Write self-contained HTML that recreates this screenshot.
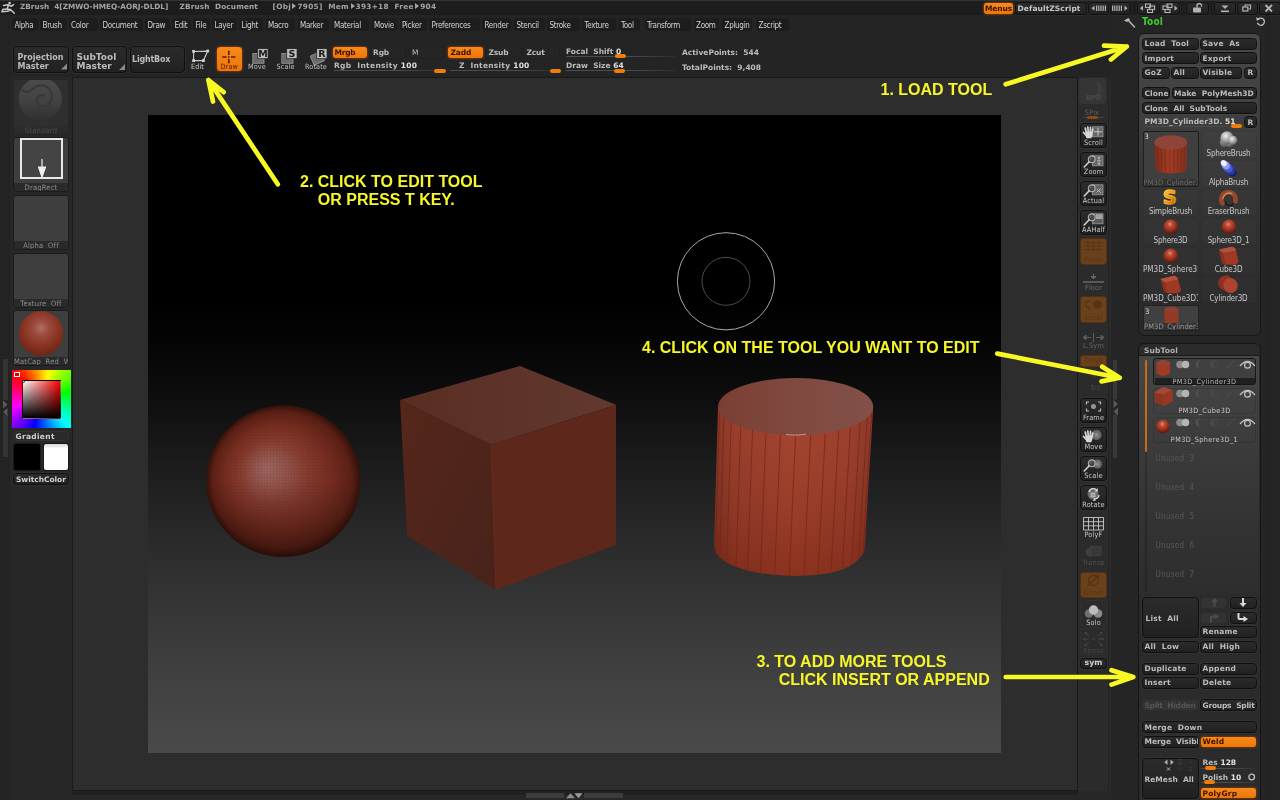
<!DOCTYPE html><html><head><meta charset="utf-8"><title>ZBrush</title><style>
*{box-sizing:border-box}
html,body{margin:0;padding:0}
body{width:1280px;height:800px;position:relative;overflow:hidden;background:#272727;font-family:"DejaVu Sans","Liberation Sans",sans-serif;font-size:7.500px;font-weight:bold;color:#bcbcbc;line-height:10px;letter-spacing:0}
.a{position:absolute;white-space:pre;line-height:12px}
.b{position:absolute;white-space:pre;background:linear-gradient(#2b2b2b,#212121);border:1px solid #101010;border-radius:3.5px;padding:.5px 0 0 1.500px;line-height:9px;overflow:hidden;letter-spacing:.2px;box-shadow:0 0 0 .5px rgba(90,90,90,.35)}
.o{background:linear-gradient(#f58a1c,#ee7608);color:#3a1200;border-color:#6a2c00}
.d{color:#555;background:#333;border-color:#2c2c2c;box-shadow:none}
.m{position:absolute;top:17.5px;height:13px;background:#1d1d1d;border-radius:3px;font-family:"DejaVu Sans Condensed","Liberation Sans",sans-serif;font-weight:normal;font-size:8px;letter-spacing:-.3px;color:#d2d2d2;line-height:15px;padding-left:2.5px;white-space:pre;overflow:hidden}
.t{position:absolute;font-family:"Liberation Sans",sans-serif;font-weight:bold;font-size:16px;line-height:18px;color:#f6f628;white-space:pre;letter-spacing:0}
.l{position:absolute;white-space:pre;font-family:"DejaVu Sans Condensed","Liberation Sans",sans-serif;font-weight:normal;font-size:8px;letter-spacing:-.2px;color:#c8c8c8;text-align:center;line-height:10px}
.sl{position:absolute;height:1px;background:linear-gradient(to right,#4c4c4c,#4c4c4c 60%,rgba(76,76,76,.2))}
.th{position:absolute;height:4px;border-radius:2px;background:#f07c0c}
.sh{position:absolute;left:1080px;width:27px;border-radius:3.5px}
.sb{background:linear-gradient(#2c2c2c,#1f1f1f);border:1px solid #101010;box-shadow:0 0 0 .5px rgba(90,90,90,.35)}
.so{background:#6a411c;border:1px solid #54300f}
.sx{position:absolute;left:0;width:100%;text-align:center;font-family:"DejaVu Sans Condensed","Liberation Sans",sans-serif;font-weight:normal;font-size:7.300px;letter-spacing:.15px;color:#c6c6c6;line-height:9px;white-space:pre}
.tr{position:absolute;left:13px;width:56px;border-radius:3px;background:#3e3e3e;border:1px solid #1c1c1c}
.tl{position:absolute;left:0;bottom:0;width:100%;height:8px;background:#2a2a2a;text-align:center;font-family:"DejaVu Sans Condensed","Liberation Sans",sans-serif;font-weight:normal;font-size:7.5px;letter-spacing:.2px;color:#8e8e8e;line-height:10px;white-space:pre;overflow:hidden}
.tri{display:inline-block;width:0;height:0;border-left:4.500px solid #a4a4a4;border-top:3px solid transparent;border-bottom:3px solid transparent;margin:0 1px 0 1.500px;vertical-align:-.5px}
#w{position:absolute;left:0;top:0;width:1280px;height:800px;overflow:hidden;will-change:transform}
svg{position:absolute;overflow:visible}
</style></head><body><div id="w">
<div class="a" style="left:0px;top:0px;width:1280px;height:15px;background:#1d1d1d;border-top:1px solid #333"></div>
<div class="a" style="left:0px;top:15px;width:10px;height:785px;background:#232323"></div>
<div class="a" style="left:10px;top:15px;width:1102px;height:62px;background:#242424"></div>
<div class="a" style="left:1111px;top:15px;width:169px;height:785px;background:#252525"></div>
<div class="a" style="left:72px;top:76.5px;width:1006px;height:714.5px;background:#2d2d2d;border:1px solid #191919"></div>
<div class="a" style="left:72px;top:791px;width:1006px;height:4px;background:#212121"></div>
<div class="a" style="left:1078px;top:77px;width:33px;height:714px;background:#2b2b2b"></div>
<div class="a" style="left:1107.5px;top:77px;width:1px;height:714px;background:#232323"></div>
<div class="a" style="left:148px;top:115px;width:853px;height:638px;background:linear-gradient(#000 0%,#000 30%,#0b0b0b 42%,#1c1c1c 55%,#2e2e2e 70%,#3d3d3d 84%,#4a4a4a 100%)"></div>
<svg style="left:1px;top:1px" width="14" height="14" viewBox="0 0 14 14"><circle cx="8.6" cy="2" r="1.3" fill="#c8c8c8"/><path d="M2.5 4.5 L7 3.8 L10.5 5.2 L12.5 3.6 M7.6 4 L6 8 L2 8.2 L0.8 10.8 L6.5 10.2 L10 9 L13.3 12.3 M6 8 L9.5 8.6" fill="none" stroke="#c8c8c8" stroke-width="1.5" stroke-linecap="round" stroke-linejoin="round"/></svg>
<div class="a" style="left:20px;top:0.8px;color:#a4a4a4;letter-spacing:0;font-size:7.300px">ZBrush  4[ZMWO-HMEQ-AORJ-DLDL]</div>
<div class="a" style="left:179.5px;top:0.8px;color:#a4a4a4;letter-spacing:.15px;font-size:7.300px">ZBrush  Document</div>
<div class="a" style="left:272.5px;top:0.8px;color:#a4a4a4;letter-spacing:.3px;font-size:7.300px">[Obj<i class="tri"></i>7905]  Mem<i class="tri"></i>393+18  Free<i class="tri"></i>904</div>
<div class="b o" style="left:982.5px;top:1.5px;width:31.0px;height:13.5px;padding:1.5px 0 0 1.5px;line-height:10px;letter-spacing:-.15px">Menus</div>
<div class="b " style="left:1015px;top:1.5px;width:71.5px;height:13.5px;padding:1.5px 0 0 1.5px;line-height:10px;letter-spacing:.1px;color:#c8c8c8">DefaultZScript</div>
<div class="b " style="left:1087.5px;top:1.5px;width:21.0px;height:13.5px;"></div>
<div class="b " style="left:1109.5px;top:1.5px;width:21.0px;height:13.5px;"></div>
<div class="b " style="left:1137px;top:1.5px;width:21px;height:13.5px;"></div>
<div class="b " style="left:1158.5px;top:1.5px;width:21.5px;height:13.5px;"></div>
<div class="b " style="left:1186px;top:1.5px;width:22.5px;height:13.5px;"></div>
<div class="b " style="left:1214px;top:1.5px;width:22px;height:13.5px;"></div>
<div class="b " style="left:1237px;top:1.5px;width:21px;height:13.5px;"></div>
<div class="b " style="left:1259px;top:1.5px;width:22px;height:13.5px;"></div>
<svg style="left:0;top:0" width="1280" height="16" viewBox="0 0 1280 16"><g fill="#b2b2b2" stroke="none"><path d="M1091.5 8.2l3-2.6v5.2z"/><rect x="1096" y="5.5" width="1.2" height="5.5"/><rect x="1098.2" y="5.5" width="1.2" height="5.5"/><rect x="1100.4" y="5.5" width="1.2" height="5.5"/><rect x="1102.6" y="5.5" width="1.2" height="5.5"/><rect x="1104.8" y="5.5" width="1.2" height="5.5"/><path d="M1127.5 8.2l-3-2.6v5.2z"/><rect x="1112" y="5.5" width="1.2" height="5.5"/><rect x="1114.2" y="5.5" width="1.2" height="5.5"/><rect x="1116.4" y="5.5" width="1.2" height="5.5"/><rect x="1118.6" y="5.5" width="1.2" height="5.5"/><rect x="1120.8" y="5.5" width="1.2" height="5.5"/><path d="M1140 8.2l3-2.6v5.2z"/><path d="M1177.500 8.2l-3-2.6v5.2z"/></g><g fill="none" stroke="#b2b2b2" stroke-width="1.1"><rect x="1145.500" y="4" width="5" height="3.500"/><rect x="1149.500" y="6" width="5" height="3.500"/><rect x="1147.500" y="9.500" width="5" height="3"/><rect x="1163" y="6" width="5" height="3.500"/><rect x="1167" y="4" width="5" height="3.500"/><rect x="1165" y="9.500" width="5" height="3"/><path d="M1197 7.500v-1.700a2.300 2.300 0 0 1 4.600 0v.7" stroke-width="1.400"/><rect x="1242.800" y="7" width="5" height="4" stroke-width="1.200"/><path d="M1245 6.500v-1.500h5.500v4h-2.200" stroke-width="1.200"/><path d="M1265.500 5l6.500 6.500M1272 5l-6.500 6.500" stroke-width="1.900"/></g><g fill="#b2b2b2"><rect x="1193" y="7.500" width="8" height="5" rx=".8"/><path d="M1221.500 5.500h7l-3.500 3.500z"/><rect x="1221" y="10.500" width="8" height="1.600"/></g></svg>
<div class="m" style="left:12px;width:25.5px">Alpha</div>
<div class="m" style="left:40px;width:26.5px">Brush</div>
<div class="m" style="left:68.5px;width:29.5px">Color</div>
<div class="m" style="left:100px;width:42.5px">Document</div>
<div class="m" style="left:145px;width:25px">Draw</div>
<div class="m" style="left:172px;width:18.5px">Edit</div>
<div class="m" style="left:193px;width:16.5px">File</div>
<div class="m" style="left:212px;width:25px">Layer</div>
<div class="m" style="left:239px;width:24px">Light</div>
<div class="m" style="left:265.5px;width:29.5px">Macro</div>
<div class="m" style="left:297.5px;width:31.5px">Marker</div>
<div class="m" style="left:331.5px;width:37.5px">Material</div>
<div class="m" style="left:371.5px;width:25.5px">Movie</div>
<div class="m" style="left:399.5px;width:27.5px">Picker</div>
<div class="m" style="left:429px;width:51px">Preferences</div>
<div class="m" style="left:482px;width:29px">Render</div>
<div class="m" style="left:514px;width:30.5px">Stencil</div>
<div class="m" style="left:547px;width:32.5px">Stroke</div>
<div class="m" style="left:582px;width:34px">Texture</div>
<div class="m" style="left:618.5px;width:21.5px">Tool</div>
<div class="m" style="left:644.5px;width:46.5px">Transform</div>
<div class="m" style="left:693.5px;width:25.5px">Zoom</div>
<div class="m" style="left:722px;width:29.5px">Zplugin</div>
<div class="m" style="left:756px;width:32.5px">Zscript</div>
<div class="b " style="left:13px;top:46px;width:56px;height:26.5px;padding:5.500px 0 0 3.5px;line-height:9px;border-radius:4px;letter-spacing:0;font-size:8px">Projection
Master</div>
<div class="b " style="left:71.5px;top:46px;width:55.5px;height:27px;padding:5.500px 0 0 4px;font-size:9px;line-height:9.5px;border-radius:4px;letter-spacing:0">SubTool
Master</div>
<div class="b " style="left:129.5px;top:46px;width:55.5px;height:26.5px;padding:8px 0 0 1.5px;line-height:10px;border-radius:4px;letter-spacing:-.2px;font-size:8px">LightBox</div>
<svg style="left:0;top:0" width="400" height="80"><path d="M61 69.500l6-6v6zM119 70l6-6v6z" fill="#8a8a8a"/></svg>
<svg style="left:188px;top:46px" width="26" height="27" viewBox="0 0 26 27"><path d="M5.600 5.500L19.700 5.100 15.400 14.600H5.600z" fill="none" stroke="#c8c8c8" stroke-width="1.100"/><g fill="#d0d0d0"><rect x="4.200" y="4" width="2.800" height="2.800"/><rect x="18.300" y="3.600" width="2.800" height="2.800"/><rect x="4.200" y="13.200" width="2.800" height="2.800"/><rect x="14" y="13.200" width="2.800" height="2.800"/></g></svg>
<div class="l" style="left:188.5px;top:62px;width:18px;color:#d0d0d0;font-size:7.200px;letter-spacing:.1px">Edit</div>
<div class="b o" style="left:215.5px;top:45.7px;width:27.3px;height:26.6px;border-radius:4px"></div>
<svg style="left:216px;top:46px" width="28" height="27" viewBox="0 0 28 27"><g stroke="#5a1c00" stroke-width="1.600"><path d="M12.800 4.800v4.200M12.800 13v4.200M6.200 11h4.400M15 11h4.400"/><rect x="12" y="10.200" width="1.600" height="1.600" fill="#5a1c00" stroke="none"/></g></svg>
<div class="l" style="left:215.5px;top:62px;width:27.500px;color:#501800;font-size:7.200px;letter-spacing:.2px">Draw</div>
<svg style="left:245px;top:46px" width="26" height="27" viewBox="0 0 26 27"><g><rect x="7.800" y="7.400" width="11.200" height="9.900" fill="#6c6c6c" stroke="#969696" stroke-width=".8"/></g><rect x="12.750" y="2.700" width="10.300" height="10" fill="#bebebe" stroke="#1c1c1c" stroke-width=".7"/><text x="17.900" y="11.200" text-anchor="middle" font-family="DejaVu Sans,sans-serif" font-weight="bold" font-size="9.500" fill="#1a1a1a">M</text></svg>
<div class="l" style="left:242px;top:62px;width:30px;color:#c4c4c4;font-size:7.200px;letter-spacing:.15px">Move</div>
<svg style="left:273.5px;top:46px" width="26" height="27" viewBox="0 0 26 27"><g><rect x="7.800" y="7.400" width="11.200" height="9.900" fill="#6c6c6c" stroke="#969696" stroke-width=".8"/></g><rect x="12.750" y="2.700" width="10.300" height="10" fill="#bebebe" stroke="#1c1c1c" stroke-width=".7"/><text x="17.900" y="11.200" text-anchor="middle" font-family="DejaVu Sans,sans-serif" font-weight="bold" font-size="9.500" fill="#1a1a1a">S</text></svg>
<div class="l" style="left:270.5px;top:62px;width:30px;color:#c4c4c4;font-size:7.200px;letter-spacing:.15px">Scale</div>
<svg style="left:304px;top:46px" width="26" height="27" viewBox="0 0 26 27"><g transform="rotate(-24 13.500 12.500)"><rect x="7.800" y="7.400" width="11.200" height="9.900" fill="#6c6c6c" stroke="#969696" stroke-width=".8"/></g><rect x="12.750" y="2.700" width="10.300" height="10" fill="#bebebe" stroke="#1c1c1c" stroke-width=".7"/><text x="17.900" y="11.200" text-anchor="middle" font-family="DejaVu Sans,sans-serif" font-weight="bold" font-size="9.500" fill="#1a1a1a">R</text></svg>
<div class="l" style="left:301px;top:62px;width:30px;color:#c4c4c4;font-size:7.200px;letter-spacing:.15px">Rotate</div>
<div class="b o" style="left:332px;top:46px;width:36px;height:12.5px;padding-left:1.500px;letter-spacing:-.25px">Mrgb</div>
<div class="b " style="left:369.5px;top:46px;width:36.0px;height:12.5px;padding-left:2.500px;letter-spacing:-.15px;background:#252525;border-color:#202020;box-shadow:none">Rgb</div>
<div class="b " style="left:408.5px;top:46px;width:36.5px;height:12.5px;padding-left:2.500px;letter-spacing:-.15px;background:#252525;border-color:#202020;box-shadow:none;font-weight:normal">M</div>
<div class="b o" style="left:447px;top:46px;width:36.5px;height:12.5px;padding-left:2.500px;letter-spacing:-.15px">Zadd</div>
<div class="b " style="left:485px;top:46px;width:36.5px;height:12.5px;padding-left:2.500px;letter-spacing:-.15px;background:#252525;border-color:#202020;box-shadow:none">Zsub</div>
<div class="b " style="left:523px;top:46px;width:36.5px;height:12.5px;padding-left:2.500px;letter-spacing:-.15px;background:#252525;border-color:#202020;box-shadow:none">Zcut</div>
<div class="a" style="left:334px;top:60px;letter-spacing:.32px">Rgb  Intensity <span style="color:#e0e0e0">100</span></div>
<div class="sl" style="left:334px;top:70px;width:110px"></div><div class="th" style="left:434px;top:68.5px;width:11.500px"></div>
<div class="a" style="left:459px;top:60px;letter-spacing:.25px">Z  Intensity <span style="color:#e0e0e0">100</span></div>
<div class="sl" style="left:450px;top:70px;width:110px"></div><div class="th" style="left:549.5px;top:68.5px;width:11.500px"></div>
<div class="a" style="left:566px;top:45.5px;">Focal  Shift <span style="color:#e0e0e0">0</span></div>
<div class="sl" style="left:566px;top:55.500px;width:110px"></div><div class="th" style="left:615px;top:54px;width:11px"></div>
<div class="a" style="left:566px;top:60px;">Draw  Size <span style="color:#e0e0e0">64</span></div>
<div class="sl" style="left:566px;top:70px;width:110px"></div><div class="th" style="left:614px;top:68.500px;width:11px"></div>
<div class="a" style="left:682px;top:47px;">ActivePoints:  544</div>
<div class="a" style="left:682px;top:61.5px;">TotalPoints:  9,408</div>
<div class="tr" style="top:79px;height:55.500px;background:#2f2f2f;border-color:#252525;overflow:hidden"><svg style="left:0;top:0" width="54" height="54" viewBox="0 0 54 54"><defs><linearGradient id="stg" x1="0" x2="0" y1="0" y2="1"><stop offset="0" stop-color="#4b4b4b"/><stop offset=".55" stop-color="#424242"/><stop offset="1" stop-color="#2f2f2f"/></linearGradient></defs><circle cx="26.300" cy="19" r="21.500" fill="url(#stg)"/><path d="M9 10.500q5 3.500 10-1.500q8-7 15-1q7 7 2 15q-5 6-11 2q-4-4-1-8q3-3 6-1" fill="none" stroke="#383838" stroke-width="2.200" stroke-linecap="round"/></svg><div class="tl" style="background:#2b2b2b;color:#4c4c4c">Standard</div></div>
<div class="tr" style="top:136.500px;height:55px"><div class="a" style="left:5.500px;top:0;width:43px;height:41px;border:2px solid #e8e8e8;background:#444"></div><svg style="left:0;top:0" width="56" height="55"><path d="M28 21v8h-3.500l3.500 10 3.500-10H28" fill="#f0f0f0" stroke="#f0f0f0" stroke-width="1.200" stroke-linejoin="round"/></svg><div class="tl">DragRect</div></div>
<div class="tr" style="top:194.500px;height:55px"><div class="tl">Alpha  Off</div></div>
<div class="tr" style="top:252.500px;height:55px"><div class="tl">Texture  Off</div></div>
<div class="tr" style="top:310px;height:55.500px"><div class="a" style="left:4.500px;top:0;width:44.500px;height:44.500px;border-radius:50%;background:radial-gradient(circle at 50% 38%,#b07066 0,#9a4a3c 22%,#8a3322 50%,#6a2414 80%,#501a0e 100%)"></div><div class="tl">MatCap  Red  W-</div></div>
<div class="a" style="left:12px;top:370px;width:58.500px;height:58px;background:conic-gradient(from 315deg,#f00,#ff0,#0f0,#0ff,#00f,#f0f,#f00)"></div>
<div class="a" style="left:21.500px;top:379.500px;width:39.500px;height:39.500px;background:linear-gradient(to bottom,rgba(0,0,0,0),#000),linear-gradient(to right,#fff,#f00);border:1px solid rgba(0,0,0,.45)"></div>
<div class="a" style="left:14px;top:371.500px;width:5.500px;height:5.500px;background:#e00000;border:.8px solid #fff"></div>
<div class="a" style="left:22px;top:379.500px;width:3px;height:3px;border-radius:50%;background:#ddd;border:.5px solid #222"></div>
<div class="b " style="left:13px;top:430.5px;width:56px;height:10.0px;background:#2a2a2a;border-color:#333;padding:0 0 0 1.500px;line-height:9px;color:#d0d0d0;box-shadow:none;letter-spacing:.3px">Gradient</div>
<div class="a" style="left:13px;top:443px;width:27.5px;height:27.5px;background:#000;border-radius:3px;border:1px solid #1a1a1a"></div>
<div class="a" style="left:43px;top:443px;width:26px;height:27.5px;background:linear-gradient(#d8d8d8,#fff 18%,#fff);border-radius:3px;border:1px solid #1a1a1a"></div>
<div class="b " style="left:13px;top:472.5px;width:56px;height:12.0px;padding:1px 0 0 2px;color:#d0d0d0;letter-spacing:-.05px">SwitchColor</div>
<div class="a" style="left:2.5px;top:359px;width:5px;height:98px;background:#333"></div>
<svg style="left:0;top:395px" width="10" height="24"><rect x="2" y="5" width="6" height="14" fill="#232323"/><path d="M3 5.500l4.500 4-4.500 4zM7.500 13l-4.500 4 4.500 4z" fill="#5a5a5a"/></svg>
<div class="a" style="left:1113px;top:359.5px;width:4px;height:98px;background:#383838"></div>
<svg style="left:1110px;top:395px" width="10" height="24"><rect x="2.500" y="4.500" width="6" height="15" fill="#242424"/><path d="M3.500 5l4.500 4-4.500 4zM8 12.500l-4.500 4 4.500 4z" fill="#5a5a5a"/></svg>
<div class="a" style="left:1265px;top:15px;width:5px;height:785px;background:#232323"></div><div class="sh " style="top:79px;height:26px"><svg style="left:0;top:0" width="25" height="24" viewBox="0 0 25 24"><rect x="-1" y="-1" width="27" height="26" rx="3.500" fill="#353535"/><path d="M14 1.500a8 8 0 0 1 0 16a10 10 0 0 0 0-16z" fill="#3e3e3e"/></svg><div class="sx" style="bottom:0;color:#4a4a4a;font-weight:bold;font-family:DejaVu Sans,sans-serif;font-size:7px;letter-spacing:-.3px;bottom:2px">BPR</div></div>
<div class="l" style="left:1078.5px;top:108px;width:27px;font-size:7.300px;letter-spacing:.15px;color:#5e5e5e">SPix</div>
<div class="a" style="left:1083px;top:117px;width:21px;height:1px;background:#444"></div>
<div class="a" style="left:1087px;top:115.7px;width:10.5px;height:3.5px;background:#8a4a16;border-radius:2px"></div>
<div class="sh sb" style="top:122.5px;height:25.5px"><svg style="left:0;top:0" width="25" height="24" viewBox="0 0 25 24"><rect x="11.500" y="2.800" width="10.500" height="10" fill="#666" stroke="#9a9a9a" stroke-width=".8"/><path d="M17 4v7.600M13 7.800h8" stroke="#d0d0d0" stroke-width=".9"/><g stroke="#d8d8d8" stroke-width="1.700" stroke-linecap="round" fill="none"><path d="M5.300 8.500L4.300 4.200M7.300 8L6.800 3M9.300 8L9.500 3.300M11 8.800L11.800 5M4.800 11L2.500 8.500"/></g><path d="M5.500 14.300L4.200 10.500L4.600 7.500L11.500 8L11.500 11L10.300 14.300z" fill="#d8d8d8"/></svg><div class="sx" style="bottom:0;">Scroll</div></div>
<div class="sh sb" style="top:151.5px;height:25.5px"><svg style="left:0;top:0" width="25" height="24" viewBox="0 0 25 24"><rect x="11.500" y="2.800" width="10.500" height="10" fill="#666" stroke="#9a9a9a" stroke-width=".8"/><path d="M18 4.200v2.600M18 8.800v2.600M16 7.800h4M16.800 5.400l1.200-1.400 1.200 1.400M16.800 10.200l1.200 1.400 1.200-1.400" stroke="#d0d0d0" stroke-width=".8" fill="none"/><circle cx="10.700" cy="6.300" r="3.400" fill="#484848" stroke="#b4b4b4" stroke-width="1.100"/><circle cx="9.800" cy="5.400" r="1" fill="#6a6a6a"/><path d="M8.200 8.800l-5 5.200" stroke="#d4d4d4" stroke-width="1.500" stroke-linecap="round"/></svg><div class="sx" style="bottom:0;">Zoom</div></div>
<div class="sh sb" style="top:180.5px;height:25.5px"><svg style="left:0;top:0" width="25" height="24" viewBox="0 0 25 24"><rect x="11.500" y="2.800" width="10.500" height="10" fill="#666" stroke="#9a9a9a" stroke-width=".8"/><path d="M15.500 10.500l4.500-4M16 7l4 4" stroke="#c8c8c8" stroke-width=".8"/><circle cx="10.700" cy="6.300" r="3.400" fill="#484848" stroke="#b4b4b4" stroke-width="1.100"/><circle cx="9.800" cy="5.400" r="1" fill="#6a6a6a"/><path d="M8.200 8.800l-5 5.200" stroke="#d4d4d4" stroke-width="1.500" stroke-linecap="round"/></svg><div class="sx" style="bottom:0;">Actual</div></div>
<div class="sh sb" style="top:209.5px;height:25.5px"><svg style="left:0;top:0" width="25" height="24" viewBox="0 0 25 24"><rect x="11.500" y="2.800" width="10.500" height="10" fill="#5c5c5c" stroke="#9a9a9a" stroke-width=".8"/><rect x="15" y="3.200" width="6.600" height="4.800" fill="#a4a4a4"/><circle cx="10.700" cy="6.300" r="3.400" fill="#484848" stroke="#b4b4b4" stroke-width="1.100"/><circle cx="9.800" cy="5.400" r="1" fill="#6a6a6a"/><path d="M8.200 8.800l-5 5.200" stroke="#d4d4d4" stroke-width="1.500" stroke-linecap="round"/></svg><div class="sx" style="bottom:0;">AAHalf</div></div>
<div class="sh so" style="top:238px;height:26.5px"><svg style="left:0;top:0" width="25" height="24" viewBox="0 0 25 24"><path d="M3 3.500h19M3 7h19M3 10.500h19M7 1.500v11M12.500 1.500v11M18 1.500v11" stroke="#563410" stroke-width=".8"/></svg><div class="sx" style="bottom:0;color:#563410">Persp</div></div>
<svg style="left:1080px;top:270px" width="27" height="14"><path d="M13.500 3.500v3.500M11 6.500l2.500 2.500 2.500-2.500z" fill="#686868" stroke="#686868" stroke-width="1"/><path d="M3 12h21" stroke="#777" stroke-width="1.200"/></svg>
<div class="l" style="left:1080px;top:283px;width:27px;font-size:7.300px;letter-spacing:.15px;color:#6c6c6c">Floor</div>
<div class="sh so" style="top:296px;height:26.5px"><svg style="left:0;top:0" width="25" height="24" viewBox="0 0 25 24"><circle cx="16.500" cy="7.500" r="4.300" fill="#563410"/><path d="M9 4.500a3 3 0 1 0-1 5.500M7 9.500l1 2.500 2-2" fill="none" stroke="#563410" stroke-width="1.300"/></svg><div class="sx" style="bottom:0;color:#563410">Local</div></div>
<svg style="left:1080px;top:331px" width="27" height="12"><path d="M3 6.500h8M16 6.500h8M13.500 2v9M3 6.500l3-2.500v5zM24 6.500l-3-2.500v5z" fill="#5c5c5c" stroke="#5c5c5c" stroke-width="1"/></svg>
<div class="l" style="left:1080px;top:341px;width:27px;font-size:7.300px;letter-spacing:.15px;color:#666">L.Sym</div>
<div class="a" style="left:1080px;top:354.5px;width:27px;height:12px;background:#6a411c;border-radius:3px;border:1px solid #54300f"></div>
<div class="l" style="left:1080px;top:355.5px;width:27px;font-size:7.300px;letter-spacing:.15px;color:#563410;font-size:8px">&#8635;xyz</div>
<div class="l" style="left:1082px;top:370px;width:27px;font-size:7.300px;letter-spacing:.15px;color:#4c4c4c">&#8635;<span style="font-size:6px">Y</span></div>
<div class="l" style="left:1082px;top:383px;width:27px;font-size:7.300px;letter-spacing:.15px;color:#4c4c4c">&#8635;<span style="font-size:6px">Z</span></div>
<div class="sh sb" style="top:397.5px;height:25.5px"><svg style="left:0;top:0" width="25" height="24" viewBox="0 0 25 24"><circle cx="12.500" cy="7.500" r="2.500" fill="#969696"/><path d="M5.500 5.500v-2.500h2.500M17 3h2.500v2.500M19.500 9.500v2.500h-2.500M8 12h-2.500v-2.500" fill="none" stroke="#bcbcbc" stroke-width="1.100"/></svg><div class="sx" style="bottom:0;">Frame</div></div>
<div class="sh sb" style="top:426.5px;height:25.5px"><svg style="left:0;top:0" width="25" height="24" viewBox="0 0 25 24"><circle cx="15.500" cy="7" r="5" fill="#6a6a6a"/><circle cx="15.500" cy="7" r="2.200" fill="#8a8a8a"/><g stroke="#d8d8d8" stroke-width="1.700" stroke-linecap="round" fill="none"><path d="M5.300 8.500L4.300 4.200M7.300 8L6.800 3M9.300 8L9.500 3.300M11 8.800L11.800 5M4.800 11L2.500 8.500"/></g><path d="M5.500 14.300L4.200 10.500L4.600 7.500L11.500 8L11.500 11L10.300 14.300z" fill="#d8d8d8"/></svg><div class="sx" style="bottom:0;">Move</div></div>
<div class="sh sb" style="top:455.5px;height:25.5px"><svg style="left:0;top:0" width="25" height="24" viewBox="0 0 25 24"><circle cx="16.500" cy="7" r="4.500" fill="#6a6a6a"/><circle cx="16.500" cy="7" r="2" fill="#8a8a8a"/><circle cx="10.700" cy="6.300" r="3.400" fill="#484848" stroke="#b4b4b4" stroke-width="1.100"/><circle cx="9.800" cy="5.400" r="1" fill="#6a6a6a"/><path d="M8.200 8.800l-5 5.200" stroke="#d4d4d4" stroke-width="1.500" stroke-linecap="round"/></svg><div class="sx" style="bottom:0;">Scale</div></div>
<div class="sh sb" style="top:484.5px;height:25.5px"><svg style="left:0;top:0" width="25" height="24" viewBox="0 0 25 24"><circle cx="12" cy="8" r="5.500" fill="#6c6c6c"/><rect x="10" y="7" width="4" height="4" fill="#999" stroke="#ddd" stroke-width=".6"/><path d="M8 6a4.500 4.500 0 0 1 8-1.500M18 9a4.500 4.500 0 0 1-5 4" fill="none" stroke="#e0e0e0" stroke-width="1.300"/><path d="M16.500 2l.3 3.500-3 .2zM11.500 14.500l2.500-2.500.5 3z" fill="#e0e0e0"/></svg><div class="sx" style="bottom:0;">Rotate</div></div>
<svg style="left:1080px;top:514px" width="27" height="18"><path d="M3.500 3.500h20v12.500h-20zM3.500 7.700h20M3.500 11.800h20M8.500 3.500v12.500M13.500 3.500v12.500M18.500 3.500v12.500" fill="none" stroke="#c8c8c8" stroke-width=".9"/></svg>
<div class="l" style="left:1080px;top:529.5px;width:27px;font-size:7.300px;letter-spacing:.15px;color:#c8c8c8">PolyF</div>
<svg style="left:1080px;top:543px" width="27" height="16"><circle cx="10" cy="9" r="4.500" fill="#3e3e3e"/><rect x="11" y="3.500" width="10" height="9" fill="#383838" stroke="#444" stroke-width=".8"/></svg>
<div class="l" style="left:1080px;top:558px;width:27px;font-size:7.300px;letter-spacing:.15px;color:#505050">Transp</div>
<div class="sh so" style="top:571.5px;height:26px"><svg style="left:0;top:0" width="25" height="24" viewBox="0 0 25 24"><circle cx="12.500" cy="7.500" r="5" fill="none" stroke="#563410" stroke-width="1.300"/><path d="M6.500 13l12-11" stroke="#563410" stroke-width="1.500"/></svg><div class="sx" style="bottom:0;color:#563410">Ghost</div></div>
<div class="sh" style="top:600px;height:26px;border:1px solid #303030"></div>
<svg style="left:1080px;top:602px" width="27" height="20"><circle cx="9" cy="11.500" r="4.300" fill="#6e6e6e"/><circle cx="18" cy="11.500" r="4.300" fill="#8a8a8a"/><circle cx="13.500" cy="8" r="4.700" fill="#bcbcbc"/></svg>
<div class="l" style="left:1080px;top:617.5px;width:27px;font-size:7.300px;letter-spacing:.15px;color:#c8c8c8">Solo</div>
<div class="sh" style="top:628px;height:27px;border:1px solid #303030"></div>
<svg style="left:1080px;top:630px" width="27" height="18"><g stroke="#4a4a4a" stroke-width=".9" fill="none"><path d="M9 6l-4-3.500M5 2.500v2M5 2.500h2M18 6l4-3.500M22 2.500v2M22 2.500h-2M9 12l-4 3.500M5 15.500v-2M5 15.500h2M18 12l4 3.500M22 15.500v-2M22 15.500h-2M9 9h-5.500M5 7.500l-1.500 1.500 1.500 1.500M18 9h5.500M22 7.500l1.500 1.500-1.500 1.500"/><circle cx="13.500" cy="9" r=".7"/></g></svg>
<div class="l" style="left:1080px;top:645.5px;width:27px;font-size:7.300px;letter-spacing:.15px;color:#484848">Xpose</div>
<div class="b " style="left:1080px;top:657.5px;width:27px;height:11.0px;text-align:center;padding:0;line-height:8px;font-size:7.800px;color:#d0d0d0;letter-spacing:0;overflow:visible">sym</div>
<svg style="left:1120px;top:14px" width="20" height="16"><path d="M4 6.500l4.500-2.500 1.500 2-3 2z" fill="#b8b8b8"/><path d="M7.500 5.500l7 7.500" stroke="#b8b8b8" stroke-width="1.500" stroke-linecap="round"/></svg>
<div class="a" style="left:1142px;top:15.5px;color:#3cd02a;font-family:DejaVu Sans Condensed,Liberation Sans,sans-serif;font-size:10px;letter-spacing:.2px;line-height:12px">Tool</div>
<svg style="left:1254px;top:14px" width="14" height="14"><path d="M4.200 5.200a3.600 3.600 0 1 1-.8 3.600" fill="none" stroke="#c0c0c0" stroke-width="1.300"/><path d="M2.300 3l.3 3.500 3.300-.8z" fill="#c0c0c0"/></svg>
<div class="a" style="left:1137.5px;top:33px;width:123px;height:303px;background:linear-gradient(#484848,#3d3d3d 32%,#333 58%,#292929);border:1.500px solid #161616;border-radius:6px"></div>
<div class="b " style="left:1142px;top:37.5px;width:56.5px;height:12.0px;">Load  Tool</div>
<div class="b " style="left:1200px;top:37.5px;width:56.5px;height:12.0px;">Save  As</div>
<div class="b " style="left:1142px;top:52px;width:56.5px;height:12.2px;">Import</div>
<div class="b " style="left:1200px;top:52px;width:56.5px;height:12.2px;">Export</div>
<div class="b " style="left:1142px;top:66.5px;width:27.5px;height:12.2px;">GoZ</div>
<div class="b " style="left:1171px;top:66.5px;width:27.5px;height:12.2px;">All</div>
<div class="b " style="left:1200px;top:66.5px;width:41.5px;height:12.2px;">Visible</div>
<div class="b " style="left:1243.5px;top:66.5px;width:13.0px;height:12.2px;padding-left:3px">R</div>
<div class="b " style="left:1142px;top:87.3px;width:27.5px;height:12.2px;padding-left:1.500px;letter-spacing:.1px">Clone</div>
<div class="b " style="left:1171.5px;top:87.3px;width:85.0px;height:12.2px;letter-spacing:.02px">Make  PolyMesh3D</div>
<div class="b " style="left:1142px;top:102px;width:114.5px;height:12px;letter-spacing:0">Clone  All  SubTools</div>
<div class="a" style="left:1144.5px;top:115.5px;letter-spacing:.02px">PM3D_Cylinder3D. <span style="color:#e4e4e4">51</span></div>
<div class="sl" style="left:1144px;top:126px;width:97px"></div><div class="th" style="left:1230.500px;top:124.300px;width:11px"></div>
<div class="b " style="left:1243.5px;top:116.3px;width:13.0px;height:12.0px;padding-left:3px">R</div>
<div class="a" style="left:1142.5px;top:130.5px;width:56px;height:56px;background:#3f3f3f;border:1px solid #1e1e1e;border-radius:2px"></div>
<div class="a" style="left:1144.5px;top:131px;color:#d8d8d8;font-weight:normal;font-size:7.500px;font-family:DejaVu Sans Condensed,sans-serif">3</div>
<svg style="left:1142.500px;top:130.500px" width="56" height="56" viewBox="0 0 56 56"><defs><linearGradient id="cy1" x1="0" x2="1"><stop offset="0" stop-color="#7e2c1c"/><stop offset=".45" stop-color="#a03c26"/><stop offset="1" stop-color="#843020"/></linearGradient></defs><path d="M11.500 12L12.500 37Q13 42 28 42.500Q43 42 43.500 37L44 12z" fill="url(#cy1)"/><path d="M14.500 16.500L15.300 39M18 18L18.700 40.500M22 18.700L22.500 41.700M26.500 19L26.800 42.300M31 18.800L31 42.200M35 18.300L34.800 41.500M38.500 17.500L38.200 40.500M41.500 16L41 39" stroke="#6e2212" stroke-width=".6" fill="none" opacity=".8"/><ellipse cx="27.800" cy="11.500" rx="16.300" ry="7.300" fill="#8e4438"/></svg>
<div class="a" style="left:1143.5px;top:178.5px;width:54px;height:7.5px;background:#333;overflow:hidden;color:#6a6a6a;font-weight:normal;font-family:DejaVu Sans Condensed,sans-serif;font-size:7.500px;line-height:7px;letter-spacing:.1px">PM3D_Cylinder3D</div>
<div class="a" style="left:1143px;top:305px;width:55.5px;height:25.5px;background:#404040;border:1px solid #222;border-radius:2px"></div>
<div class="a" style="left:1145px;top:305.5px;color:#d8d8d8;font-weight:normal;font-size:7.500px;font-family:DejaVu Sans Condensed,sans-serif">3</div>
<svg style="left:1143px;top:305px" width="56" height="26" viewBox="0 0 56 26"><path d="M21.500 4.500V18h14V4.500z" fill="#973824"/><ellipse cx="28.500" cy="4.500" rx="7" ry="3" fill="#8c4032"/></svg>
<div class="a" style="left:1144px;top:322.5px;width:53.5px;height:7.5px;background:#333;overflow:hidden;color:#9a9a9a;font-weight:normal;font-family:DejaVu Sans Condensed,sans-serif;font-size:7.500px;line-height:7px;letter-spacing:.1px">PM3D_Cylinder3D</div>
<div class="a" style="left:1200.5px;top:130.5px;width:56px;height:28px;border:1px solid rgba(0,0,0,.08);border-radius:2px;background:rgba(255,255,255,.012)"></div>
<div class="a" style="left:1200.5px;top:159.5px;width:56px;height:28px;border:1px solid rgba(0,0,0,.08);border-radius:2px;background:rgba(255,255,255,.012)"></div>
<div class="a" style="left:1200.5px;top:188.5px;width:56px;height:28px;border:1px solid rgba(0,0,0,.08);border-radius:2px;background:rgba(255,255,255,.012)"></div>
<div class="a" style="left:1200.5px;top:217.5px;width:56px;height:28px;border:1px solid rgba(0,0,0,.08);border-radius:2px;background:rgba(255,255,255,.012)"></div>
<div class="a" style="left:1200.5px;top:246.5px;width:56px;height:28px;border:1px solid rgba(0,0,0,.08);border-radius:2px;background:rgba(255,255,255,.012)"></div>
<div class="a" style="left:1200.5px;top:275.5px;width:56px;height:28px;border:1px solid rgba(0,0,0,.08);border-radius:2px;background:rgba(255,255,255,.012)"></div>
<div class="a" style="left:1142.5px;top:188.5px;width:56px;height:28px;border:1px solid rgba(0,0,0,.08);border-radius:2px;background:rgba(255,255,255,.012)"></div>
<div class="a" style="left:1142.5px;top:217.5px;width:56px;height:28px;border:1px solid rgba(0,0,0,.08);border-radius:2px;background:rgba(255,255,255,.012)"></div>
<div class="a" style="left:1142.5px;top:246.5px;width:56px;height:28px;border:1px solid rgba(0,0,0,.08);border-radius:2px;background:rgba(255,255,255,.012)"></div>
<div class="a" style="left:1142.5px;top:275.5px;width:56px;height:28px;border:1px solid rgba(0,0,0,.08);border-radius:2px;background:rgba(255,255,255,.012)"></div>
<svg style="left:0;top:0" width="1280" height="800" viewBox="0 0 1280 800"><defs><radialGradient id="sg" cx=".45" cy=".32" r=".68"><stop offset="0" stop-color="#e08c78"/><stop offset=".28" stop-color="#bc4a34"/><stop offset=".62" stop-color="#98301e"/><stop offset="1" stop-color="#58160a"/></radialGradient><radialGradient id="wg" cx=".4" cy=".35" r=".7"><stop offset="0" stop-color="#f0f0f0"/><stop offset=".6" stop-color="#9a9a9a"/><stop offset="1" stop-color="#555"/></radialGradient><radialGradient id="wd" cx=".4" cy=".35" r=".7"><stop offset="0" stop-color="#a8a8a8"/><stop offset=".6" stop-color="#707070"/><stop offset="1" stop-color="#444"/></radialGradient><radialGradient id="bg" cx=".35" cy=".3" r=".8"><stop offset="0" stop-color="#e8ecff"/><stop offset=".4" stop-color="#5468d8"/><stop offset="1" stop-color="#1a2478"/></radialGradient><linearGradient id="gg" x1="0" y1="0" x2="1" y2="1"><stop offset="0" stop-color="#ffd84a"/><stop offset=".5" stop-color="#e89010"/><stop offset="1" stop-color="#9a4c00"/></linearGradient></defs><g><circle cx="1224.500" cy="142.500" r="4.800" fill="url(#wd)"/><circle cx="1229.500" cy="143.500" r="3.800" fill="url(#wd)"/><circle cx="1227" cy="137.800" r="6.600" fill="url(#wg)"/><circle cx="1232.800" cy="140.300" r="4.600" fill="url(#wg)"/></g><g><ellipse cx="1231.500" cy="171.500" rx="5.500" ry="4.200" fill="#161e6e" transform="rotate(45 1231.500 171.500)"/><ellipse cx="1229.500" cy="169.500" rx="6" ry="4.600" fill="#2a3aa8" transform="rotate(45 1229.500 169.500)"/><ellipse cx="1227.500" cy="167.300" rx="5.800" ry="4.400" fill="#4458d0" transform="rotate(45 1227.500 167.300)"/><ellipse cx="1225.500" cy="165" rx="5" ry="3.800" fill="#8c9cf0" transform="rotate(45 1225.500 165)"/><ellipse cx="1223.800" cy="163.200" rx="3.400" ry="2.600" fill="#f0f2ff" transform="rotate(45 1223.800 163.200)"/></g><text x="1170" y="204.300" text-anchor="middle" font-family="DejaVu Sans,Liberation Sans,sans-serif" font-weight="bold" font-size="19.500" fill="url(#gg)" stroke="url(#gg)" stroke-width="1.500" stroke-linejoin="round">S</text><text x="1169.600" y="203.900" text-anchor="middle" font-family="DejaVu Sans,Liberation Sans,sans-serif" font-weight="bold" font-size="19.500" fill="none" stroke="#ffe070" stroke-width=".5" opacity=".6">S</text><path d="M1222.500 203.500a7.200 7.200 0 1 1 12.800-2" fill="none" stroke="#98482a" stroke-width="4.400" stroke-linecap="round"/><path d="M1222.800 198.500a6.500 6.500 0 0 1 9-5" fill="none" stroke="#d08a5c" stroke-width="1.500" stroke-linecap="round"/><path d="M1233.500 203a4.500 4.500 0 0 1-7 1.500q-1.500-1.500 0-3" fill="none" stroke="#1a1a1a" stroke-width="1.500"/><circle cx="1170.700" cy="226.800" r="7.200" fill="url(#sg)"/><circle cx="1229" cy="226.800" r="7.200" fill="url(#sg)"/><circle cx="1170.700" cy="255.800" r="7.200" fill="url(#sg)"/><path d="M1219 249.500l12.500-2.800q4 .3 4.500 4l2.500 11q-1 2.500-4 3l-10.500-.3q-2.200-1-2.500-3z" fill="#8c3020"/><path d="M1219 249.500l12.500-2.800q4 .3 4.500 4l-12.500 2.300z" fill="#b2523e"/><path d="M1223.500 253l12.500-2.300 2.500 11q-1 2.500-4 3l-9-.2z" fill="#a03826"/><path d="M1160.500 279l13-3.300q4 .3 4.500 4l3 10.500q-1 2.500-4 3l-11-.3q-2.200-1-2.500-3z" fill="#8c3020"/><path d="M1160.500 279l13-3.300q4 .3 4.500 4l-13 2.800z" fill="#b2523e"/><path d="M1165 282.500l13-2.800 3 10.500q-1 2.500-4 3l-9.500-.2z" fill="#a03826"/><ellipse cx="1225.500" cy="283" rx="7.500" ry="7.500" fill="#8a2e1e"/><path d="M1220 278l8-3 9.500 14-7.500 3z" fill="#92321f"/><ellipse cx="1230.500" cy="285.500" rx="7.200" ry="7.600" fill="#ac4430" transform="rotate(-20 1230.500 285.500)"/></svg>
<div class="l" style="left:1198.5px;top:148.5px;width:60px">SphereBrush</div>
<div class="l" style="left:1198.5px;top:177.5px;width:60px">AlphaBrush</div>
<div class="l" style="left:1140.5px;top:206.5px;width:60px">SimpleBrush</div>
<div class="l" style="left:1198.5px;top:206.5px;width:60px">EraserBrush</div>
<div class="l" style="left:1140.5px;top:235.5px;width:60px">Sphere3D</div>
<div class="l" style="left:1198.5px;top:235.5px;width:60px">Sphere3D_1</div>
<div class="l" style="left:1198.5px;top:264.5px;width:60px">Cube3D</div>
<div class="l" style="left:1198.5px;top:293.5px;width:60px">Cylinder3D</div>
<div class="l" style="left:1143px;top:264.5px;width:55px;height:10px;overflow:hidden;text-align:left;letter-spacing:0">PM3D_Sphere3D</div>
<div class="l" style="left:1143px;top:293.5px;width:55px;height:10px;overflow:hidden;text-align:left;letter-spacing:0">PM3D_Cube3D1</div>
<div class="a" style="left:1137.5px;top:342.5px;width:123px;height:460px;background:#2b2b2b;border:1.500px solid #161616;border-radius:6px 6px 0 0"></div>
<div class="a" style="left:1139px;top:354.5px;width:120px;height:240px;background:linear-gradient(#464646,#3c3c3c 35%,#333 70%,#2d2d2d);border-top:1px solid #1a1a1a"></div>
<div class="a" style="left:1144px;top:344.5px;color:#b0b0b0;letter-spacing:.12px">SubTool</div>
<div class="a" style="left:1144.5px;top:359.5px;width:2.5px;height:92px;background:#c86a18;border-radius:1px"></div>
<div class="a" style="left:1144.5px;top:452px;width:2.5px;height:140px;background:rgba(0,0,0,.18)"></div>
<div class="a" style="left:1153px;top:357.8px;width:103px;height:27.2px;border:1.500px solid #161616;border-radius:3px;background:#404040"></div>
<div class="a" style="left:1154.5px;top:378px;width:100px;height:6px;background:#202020"></div>
<div class="a" style="left:1153px;top:387.5px;width:103px;height:26.5px;border:1px solid rgba(0,0,0,.13);border-radius:3px"></div>
<div class="a" style="left:1153px;top:416.5px;width:103px;height:26.5px;border:1px solid rgba(0,0,0,.13);border-radius:3px"></div>
<div class="l" style="left:1154px;top:377.3px;width:101px;color:#b4b4b4;font-size:7.200px;letter-spacing:.42px">PM3D_Cylinder3D</div>
<div class="l" style="left:1154px;top:406px;width:101px;color:#c8c8c8;font-size:7.200px;letter-spacing:.42px">PM3D_Cube3D</div>
<div class="l" style="left:1154px;top:435px;width:101px;color:#c8c8c8;font-size:7.200px;letter-spacing:.42px">PM3D_Sphere3D_1</div>
<svg style="left:0;top:0" width="1280" height="800" viewBox="0 0 1280 800"><path d="M1156.500 363v10.500q6.500 4.500 13.500 0V363z" fill="#a03a24"/><ellipse cx="1163.200" cy="363" rx="6.800" ry="3" fill="#8e4434"/><g transform="translate(0 -1.500)"><path d="M1154 394l9-5.500 9.500 3v11.500l-9 4.500-8.500-3.500z" fill="#8e3422"/><path d="M1154 394l9-5.500 9.500 3-9.500 4.500z" fill="#a04a38"/><path d="M1163 396l9.500-4.500v11.500l-9 4.500z" fill="#983824"/></g><circle cx="1163" cy="426.500" r="6.800" fill="url(#sg)"/><circle cx="1180" cy="364.5" r="3.800" fill="#8a8a8a"/><circle cx="1185.500" cy="364.5" r="3.800" fill="#b4b4b4"/><path d="M1199.800 360.3a4.200 4.200 0 1 0 0 8.400a6.500 6.500 0 0 1 0-8.400z" fill="#525252"/><circle cx="1214" cy="364.5" r="3.800" fill="none" stroke="#484848" stroke-width="1"/><path d="M1214 360.7a3.800 3.800 0 0 0 0 7.600z" fill="#484848"/><path d="M1226 368.0q2.500-.5 3.500-3l5-4.500" fill="none" stroke="#484848" stroke-width="1.600"/><path d="M1240 366.0q7.500-9.500 15 0" fill="none" stroke="#c4c4c4" stroke-width="1.250"/><circle cx="1247.500" cy="365.3" r="2.900" fill="none" stroke="#c4c4c4" stroke-width="1.200"/><circle cx="1180" cy="393.5" r="3.800" fill="#8a8a8a"/><circle cx="1185.500" cy="393.5" r="3.800" fill="#b4b4b4"/><path d="M1199.800 389.3a4.200 4.200 0 1 0 0 8.400a6.500 6.500 0 0 1 0-8.400z" fill="#525252"/><circle cx="1214" cy="393.5" r="3.800" fill="none" stroke="#484848" stroke-width="1"/><path d="M1214 389.7a3.800 3.800 0 0 0 0 7.600z" fill="#484848"/><path d="M1226 397.0q2.500-.5 3.500-3l5-4.500" fill="none" stroke="#484848" stroke-width="1.600"/><path d="M1240 395.0q7.500-9.500 15 0" fill="none" stroke="#c4c4c4" stroke-width="1.250"/><circle cx="1247.500" cy="394.3" r="2.900" fill="none" stroke="#c4c4c4" stroke-width="1.200"/><circle cx="1180" cy="422.5" r="3.800" fill="#8a8a8a"/><circle cx="1185.500" cy="422.5" r="3.800" fill="#b4b4b4"/><path d="M1199.800 418.3a4.200 4.200 0 1 0 0 8.400a6.500 6.500 0 0 1 0-8.400z" fill="#525252"/><circle cx="1214" cy="422.5" r="3.800" fill="none" stroke="#484848" stroke-width="1"/><path d="M1214 418.7a3.800 3.800 0 0 0 0 7.600z" fill="#484848"/><path d="M1226 426.0q2.500-.5 3.500-3l5-4.500" fill="none" stroke="#484848" stroke-width="1.600"/><path d="M1240 424.0q7.500-9.500 15 0" fill="none" stroke="#c4c4c4" stroke-width="1.250"/><circle cx="1247.500" cy="423.3" r="2.900" fill="none" stroke="#c4c4c4" stroke-width="1.200"/></svg>
<div class="a" style="left:1155.5px;top:453px;color:#585858;font-weight:normal;font-family:DejaVu Sans Condensed,sans-serif;letter-spacing:.3px;font-size:8px">Unused  3</div>
<div class="a" style="left:1155.5px;top:482px;color:#585858;font-weight:normal;font-family:DejaVu Sans Condensed,sans-serif;letter-spacing:.3px;font-size:8px">Unused  4</div>
<div class="a" style="left:1155.5px;top:511px;color:#585858;font-weight:normal;font-family:DejaVu Sans Condensed,sans-serif;letter-spacing:.3px;font-size:8px">Unused  5</div>
<div class="a" style="left:1155.5px;top:540px;color:#585858;font-weight:normal;font-family:DejaVu Sans Condensed,sans-serif;letter-spacing:.3px;font-size:8px">Unused  6</div>
<div class="a" style="left:1155.5px;top:569px;color:#585858;font-weight:normal;font-family:DejaVu Sans Condensed,sans-serif;letter-spacing:.3px;font-size:8px">Unused  7</div>
<div class="b " style="left:1142px;top:596.5px;width:56.5px;height:41.5px;padding:16px 0 0 2.500px;border-radius:4px">List  All</div>
<div class="b d" style="left:1200px;top:596.5px;width:27px;height:12.0px;"></div>
<div class="b " style="left:1229.5px;top:596.5px;width:27.0px;height:12.0px;"></div>
<div class="b d" style="left:1200px;top:611.5px;width:27px;height:12.0px;"></div>
<div class="b " style="left:1229.5px;top:611.5px;width:27.0px;height:12.0px;"></div>
<svg style="left:0;top:0" width="1280" height="800" viewBox="0 0 1280 800"><path d="M1213.500 607v-5h-2.500l3.500-4 3.500 4h-2.500v5z" fill="#4c4c4c"/><path d="M1242 598v5h-2.500l3.500 4 3.500-4h-2.500v-5z" fill="#d8d8d8"/><path d="M1210 622.500v-5q0-2 2-2h3v-2l4 3-4 3v-2h-3v5z" fill="#4c4c4c"/><path d="M1237.500 613v5q0 2 2 2h4v2l4.500-3-4.500-3v2h-4v-5z" fill="#d8d8d8"/></svg>
<div class="b " style="left:1200px;top:625.8px;width:56.5px;height:12.2px;">Rename</div>
<div class="b " style="left:1142px;top:640.5px;width:56.5px;height:12.0px;">All  Low</div>
<div class="b " style="left:1200px;top:640.5px;width:56.5px;height:12.0px;">All  High</div>
<div class="b " style="left:1142px;top:662.5px;width:56.5px;height:12.0px;">Duplicate</div>
<div class="b " style="left:1200px;top:662.5px;width:56.5px;height:12.0px;">Append</div>
<div class="b " style="left:1142px;top:676.8px;width:56.5px;height:12.0px;">Insert</div>
<div class="b " style="left:1200px;top:676.8px;width:56.5px;height:12.0px;">Delete</div>
<div class="b d" style="left:1142px;top:699px;width:56.5px;height:12px;letter-spacing:-.28px">Split  Hidden</div>
<div class="b " style="left:1200px;top:699px;width:56.5px;height:12px;letter-spacing:-.22px">Groups  Split</div>
<div class="b " style="left:1142px;top:721px;width:114.5px;height:12px;">Merge  Down</div>
<div class="b " style="left:1142px;top:735.5px;width:56.5px;height:12.0px;letter-spacing:-.05px">Merge  Visible</div>
<div class="b o" style="left:1200px;top:735.5px;width:56.5px;height:12.0px;">Weld</div>
<div class="b " style="left:1142px;top:757.5px;width:56.5px;height:41.3px;padding:16px 0 0 1.500px;border-radius:4px;letter-spacing:0">ReMesh  All</div>
<svg style="left:1142px;top:757px" width="57" height="28"><path d="M25.500 2.500v5.500l-3.200-2.750zM28.500 2.500v5.500l3.200-2.750z" fill="#b0b0b0"/><path d="M25 10.500l3 3M28 10.500l-3 3" stroke="#b0b0b0" stroke-width="1"/><path d="M36 2.500h4l-2 2zM36 7h4l-2-2zM47 2.500l3 3M36.500 10.500l2 1.500 2-1.500M38.500 12v2M47 10.500h3l-3 3h3" stroke="#383838" fill="none" stroke-width="1"/></svg>
<div class="a" style="left:1202.5px;top:757px;">Res <span style="color:#e4e4e4">128</span></div>
<div class="sl" style="left:1201px;top:767.500px;width:54px"></div><div class="th" style="left:1205.300px;top:765.800px;width:11px"></div>
<div class="a" style="left:1202.5px;top:772px;">Polish <span style="color:#e4e4e4">10</span></div>
<div class="sl" style="left:1201px;top:781.500px;width:54px"></div><div class="th" style="left:1204.300px;top:779.800px;width:11px"></div>
<svg style="left:1246px;top:771px" width="12" height="12"><circle cx="5.700" cy="6" r="2.800" fill="none" stroke="#c0c0c0" stroke-width="1.300"/></svg>
<div class="b o" style="left:1200px;top:787px;width:56.5px;height:12px;">PolyGrp</div><svg style="left:0;top:0" width="1280" height="800" viewBox="0 0 1280 800"><defs><radialGradient id="S1" cx=".5" cy=".5" r=".5" fx=".39" fy=".41"><stop offset="0" stop-color="#9c6761"/><stop offset=".2" stop-color="#91554d"/><stop offset=".44" stop-color="#853b2e"/><stop offset=".7" stop-color="#732c1f"/><stop offset=".9" stop-color="#5b2015"/><stop offset="1" stop-color="#34110a"/></radialGradient><linearGradient id="S2" x1="0" x2="0" y1="0" y2="1"><stop offset=".5" stop-color="#000" stop-opacity="0"/><stop offset="1" stop-color="#000" stop-opacity=".28"/></linearGradient><linearGradient id="C1" x1="0" x2="1" y1="0" y2="0"><stop offset="0" stop-color="#7c2a1a"/><stop offset=".12" stop-color="#92331f"/><stop offset=".5" stop-color="#9e3923"/><stop offset=".85" stop-color="#963520"/><stop offset="1" stop-color="#842c1b"/></linearGradient><linearGradient id="C2" x1="0" x2="0" y1="0" y2="1"><stop offset="0" stop-color="#fff" stop-opacity=".06"/><stop offset="1" stop-color="#000" stop-opacity=".12"/></linearGradient><pattern id="grid" width="3" height="3" patternUnits="userSpaceOnUse"><path d="M0 .5H3M.5 0V3" stroke="#3a0e06" stroke-width=".5" opacity=".14"/></pattern><linearGradient id="C3" x1="0" x2="1" y1="0" y2="0"><stop offset="0" stop-color="#7b3e33"/><stop offset=".5" stop-color="#7f4a40"/><stop offset="1" stop-color="#825048"/></linearGradient><linearGradient id="K1" x1="0" x2="1" y1="0" y2="0"><stop offset="0" stop-color="#5a2d22"/><stop offset=".55" stop-color="#5e342a"/><stop offset="1" stop-color="#61392f"/></linearGradient><linearGradient id="K2" x1="0" x2="1" y1="0" y2="1"><stop offset="0" stop-color="#57261a"/><stop offset=".5" stop-color="#4f251b"/><stop offset="1" stop-color="#48221a"/></linearGradient></defs><circle cx="726" cy="281.300" r="48.600" fill="none" stroke="#a8a8a8" stroke-width="1"/><circle cx="726" cy="281.300" r="24" fill="none" stroke="#4c4c4c" stroke-width="1"/><ellipse cx="283.400" cy="481.300" rx="77.200" ry="75.700" fill="url(#S1)"/><ellipse cx="283.400" cy="481.300" rx="77.200" ry="75.700" fill="url(#S2)"/><ellipse cx="283.400" cy="481.300" rx="77.200" ry="75.700" fill="url(#grid)"/><path d="M400 400L520 366L616 404.800L491.200 444.800z" fill="url(#K1)"/><path d="M400 400L491.200 444.800L496 590L407.200 536z" fill="url(#K2)"/><path d="M491.200 444.800L616 404.800L616 544.800L496 590z" fill="#5d281b"/><path d="M491.200 444.800L496 590" stroke="#6a2c1c" stroke-width="1" fill="none"/><path d="M718 407L714 546Q716 563 750 571Q790 580 830 573Q858 567 864.500 550L873.200 407z" fill="url(#C1)"/><path d="M718 407L714 546Q716 563 750 571Q790 580 830 573Q858 567 864.500 550L873.200 407z" fill="url(#C2)"/><path d="M719.5 412.2L715.4 553.6M723.9 417.5L719.7 558.9M731.1 422.5L726.7 563.8M740.7 426.8L736.0 568.2M752.5 430.4L747.4 571.7M765.9 433.0L760.4 574.3M780.5 434.7L774.5 576.0M795.6 435.2L789.2 576.5M810.7 434.7L803.9 576.0M825.3 433.0L818.0 574.3M838.7 430.4L831.0 571.7M850.5 426.8L842.4 568.2M860.1 422.5L851.7 563.8M867.3 417.5L858.7 558.9M871.7 412.2L863.0 553.6" stroke="#7c2414" stroke-width=".9" fill="none" opacity=".85"/><ellipse cx="795.600" cy="406.600" rx="77.600" ry="28.600" fill="url(#C3)"/><path d="M786 434.500q10 1.500 20-.2" stroke="#e8b0a0" stroke-width="1" fill="none" opacity=".7"/><g fill="none" stroke="#f8f822" stroke-width="4.700" stroke-linecap="round" stroke-linejoin="round"><path d="M1005.700 84.300L1126.800 46.500M1104 45.600L1126.800 46.500L1111 59.500"/><path d="M277.800 184.200L208.400 80M213 101.500L208.400 80L223.600 92.200"/><path d="M997.200 353.600L1119.700 377.800M1102.200 366.800L1119.700 377.800L1101.500 381.400"/><path d="M1005.700 677L1133.300 677M1111.500 670.200L1133.300 677L1111.500 684.600"/></g></svg>
<div class="t" style="left:880.5px;top:80.5px;">1. LOAD TOOL</div>
<div class="t" style="left:300px;top:173px;">2. CLICK TO EDIT TOOL
    OR PRESS T KEY.</div>
<div class="t" style="left:642px;top:339px;">4. CLICK ON THE TOOL YOU WANT TO EDIT</div>
<div class="t" style="left:756.5px;top:653px;">3. TO ADD MORE TOOLS
     CLICK INSERT OR APPEND</div>
<div class="a" style="left:525.500px;top:793px;width:38.500px;height:4.800px;background:#3c3c3c"></div><div class="a" style="left:584px;top:793px;width:39px;height:4.800px;background:#3c3c3c"></div>
<svg style="left:564px;top:792px" width="20" height="8"><path d="M2 6.200l4.500-5 4.500 5z" fill="#8c8c8c"/><path d="M10.500 1.200l4 5 4-5z" fill="#9c9c9c"/></svg>
</div></body></html>
